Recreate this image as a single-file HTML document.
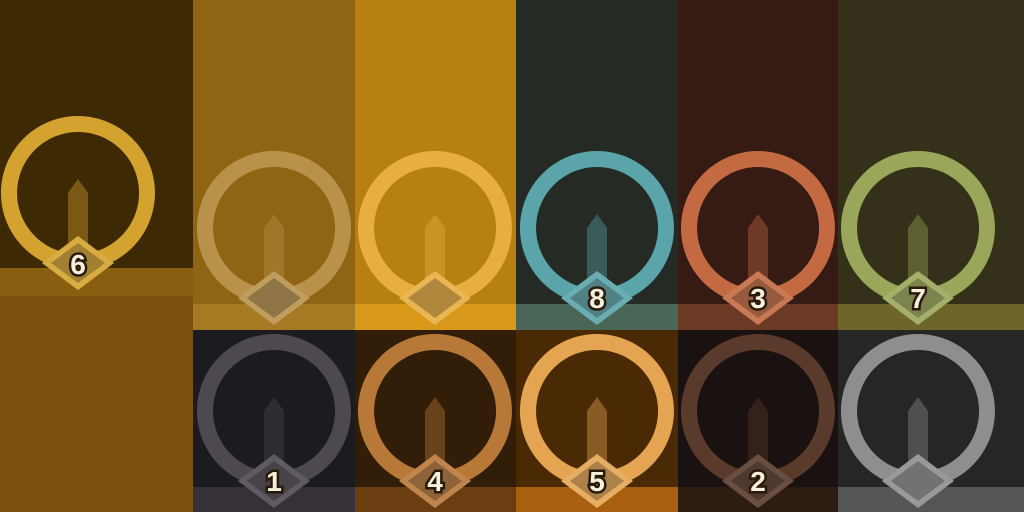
<!DOCTYPE html>
<html><head><meta charset="utf-8"><style>
html,body{margin:0;padding:0;background:#000;width:1024px;height:512px;overflow:hidden}
svg{display:block}
text{font-family:"Liberation Sans",sans-serif;font-weight:bold;font-size:28px;text-anchor:middle;fill:#f4f0dc;stroke:#2a1a0a;stroke-width:5px;paint-order:stroke}
</style></head><body>
<svg width="1024" height="512" viewBox="0 0 1024 512" xmlns="http://www.w3.org/2000/svg">
<defs>
<g id="badge">
  <polygon points="-10,0 0,-14 10,0 10,70 -10,70" fill="currentColor" opacity="0.4"/>
  <path fill-rule="evenodd" fill="currentColor" d="M0,-77 A77,77 0 1 1 -0.1,-77 Z M0,-61 A61,61 0 1 0 0.1,-61 Z"/>
  <polygon points="0,43 36,70 0,97 -36,70" fill="currentColor"/>
  <polygon points="0,43 36,70 0,97 -36,70" fill="#fff" opacity="0.1"/>
  <polygon points="0,50 27,70 0,90 -27,70" fill="#000" opacity="0.25"/>
</g>
</defs>
<!-- column 0 -->
<rect x="0" y="0" width="193" height="512" fill="#3e2905"/>
<rect x="0" y="268" width="193" height="244" fill="#7a520d"/>
<rect x="0" y="268" width="193" height="28" fill="#8a5e10"/>
<g transform="translate(78,193)" style="color:#d4a22e"><use href="#badge"/></g>
<text x="78" y="274">6</text>

<!-- top row -->
<rect x="193" y="0" width="162" height="330" fill="#8f6514"/><rect x="193" y="304" width="162" height="26" fill="#a67a22"/>
<rect x="355" y="0" width="161" height="330" fill="#b8800f"/><rect x="355" y="304" width="161" height="26" fill="#d8981a"/>
<rect x="516" y="0" width="162" height="330" fill="#252b24"/><rect x="516" y="304" width="162" height="26" fill="#4a6656"/>
<rect x="678" y="0" width="160" height="330" fill="#361a14"/><rect x="678" y="304" width="160" height="26" fill="#6a3a24"/>
<rect x="838" y="0" width="186" height="330" fill="#35301a"/><rect x="838" y="304" width="186" height="26" fill="#6e6528"/>
<g transform="translate(274,228)" style="color:#b8924a"><use href="#badge"/></g>
<g transform="translate(435,228)" style="color:#e8ae40"><use href="#badge"/></g>
<g transform="translate(597,228)" style="color:#5aa4aa"><use href="#badge"/></g>
<g transform="translate(758,228)" style="color:#c46a42"><use href="#badge"/></g>
<g transform="translate(918,228)" style="color:#9aa75a"><use href="#badge"/></g>
<text x="597" y="308">8</text><text x="758" y="308">3</text><text x="918" y="308">7</text>

<!-- bottom row -->
<rect x="193" y="330" width="162" height="182" fill="#1c1c20"/><rect x="193" y="487" width="162" height="25" fill="#363038"/>
<rect x="355" y="330" width="161" height="182" fill="#321e08"/><rect x="355" y="487" width="161" height="25" fill="#6a3e10"/>
<rect x="516" y="330" width="162" height="182" fill="#4a2a04"/><rect x="516" y="487" width="162" height="25" fill="#a86010"/>
<rect x="678" y="330" width="160" height="182" fill="#1a1210"/><rect x="678" y="487" width="160" height="25" fill="#2c1c12"/>
<rect x="838" y="330" width="186" height="182" fill="#262626"/><rect x="838" y="487" width="186" height="25" fill="#555555"/>
<g transform="translate(274,411)" style="color:#4e4850"><use href="#badge"/></g>
<g transform="translate(435,411)" style="color:#b87838"><use href="#badge"/></g>
<g transform="translate(597,411)" style="color:#e4a452"><use href="#badge"/></g>
<g transform="translate(758,411)" style="color:#5a3a2a"><use href="#badge"/></g>
<g transform="translate(918,411)" style="color:#8e8e8e"><use href="#badge"/></g>
<text x="274" y="491">1</text><text x="435" y="491">4</text><text x="597" y="491">5</text><text x="758" y="491">2</text>
</svg>
</body></html>
